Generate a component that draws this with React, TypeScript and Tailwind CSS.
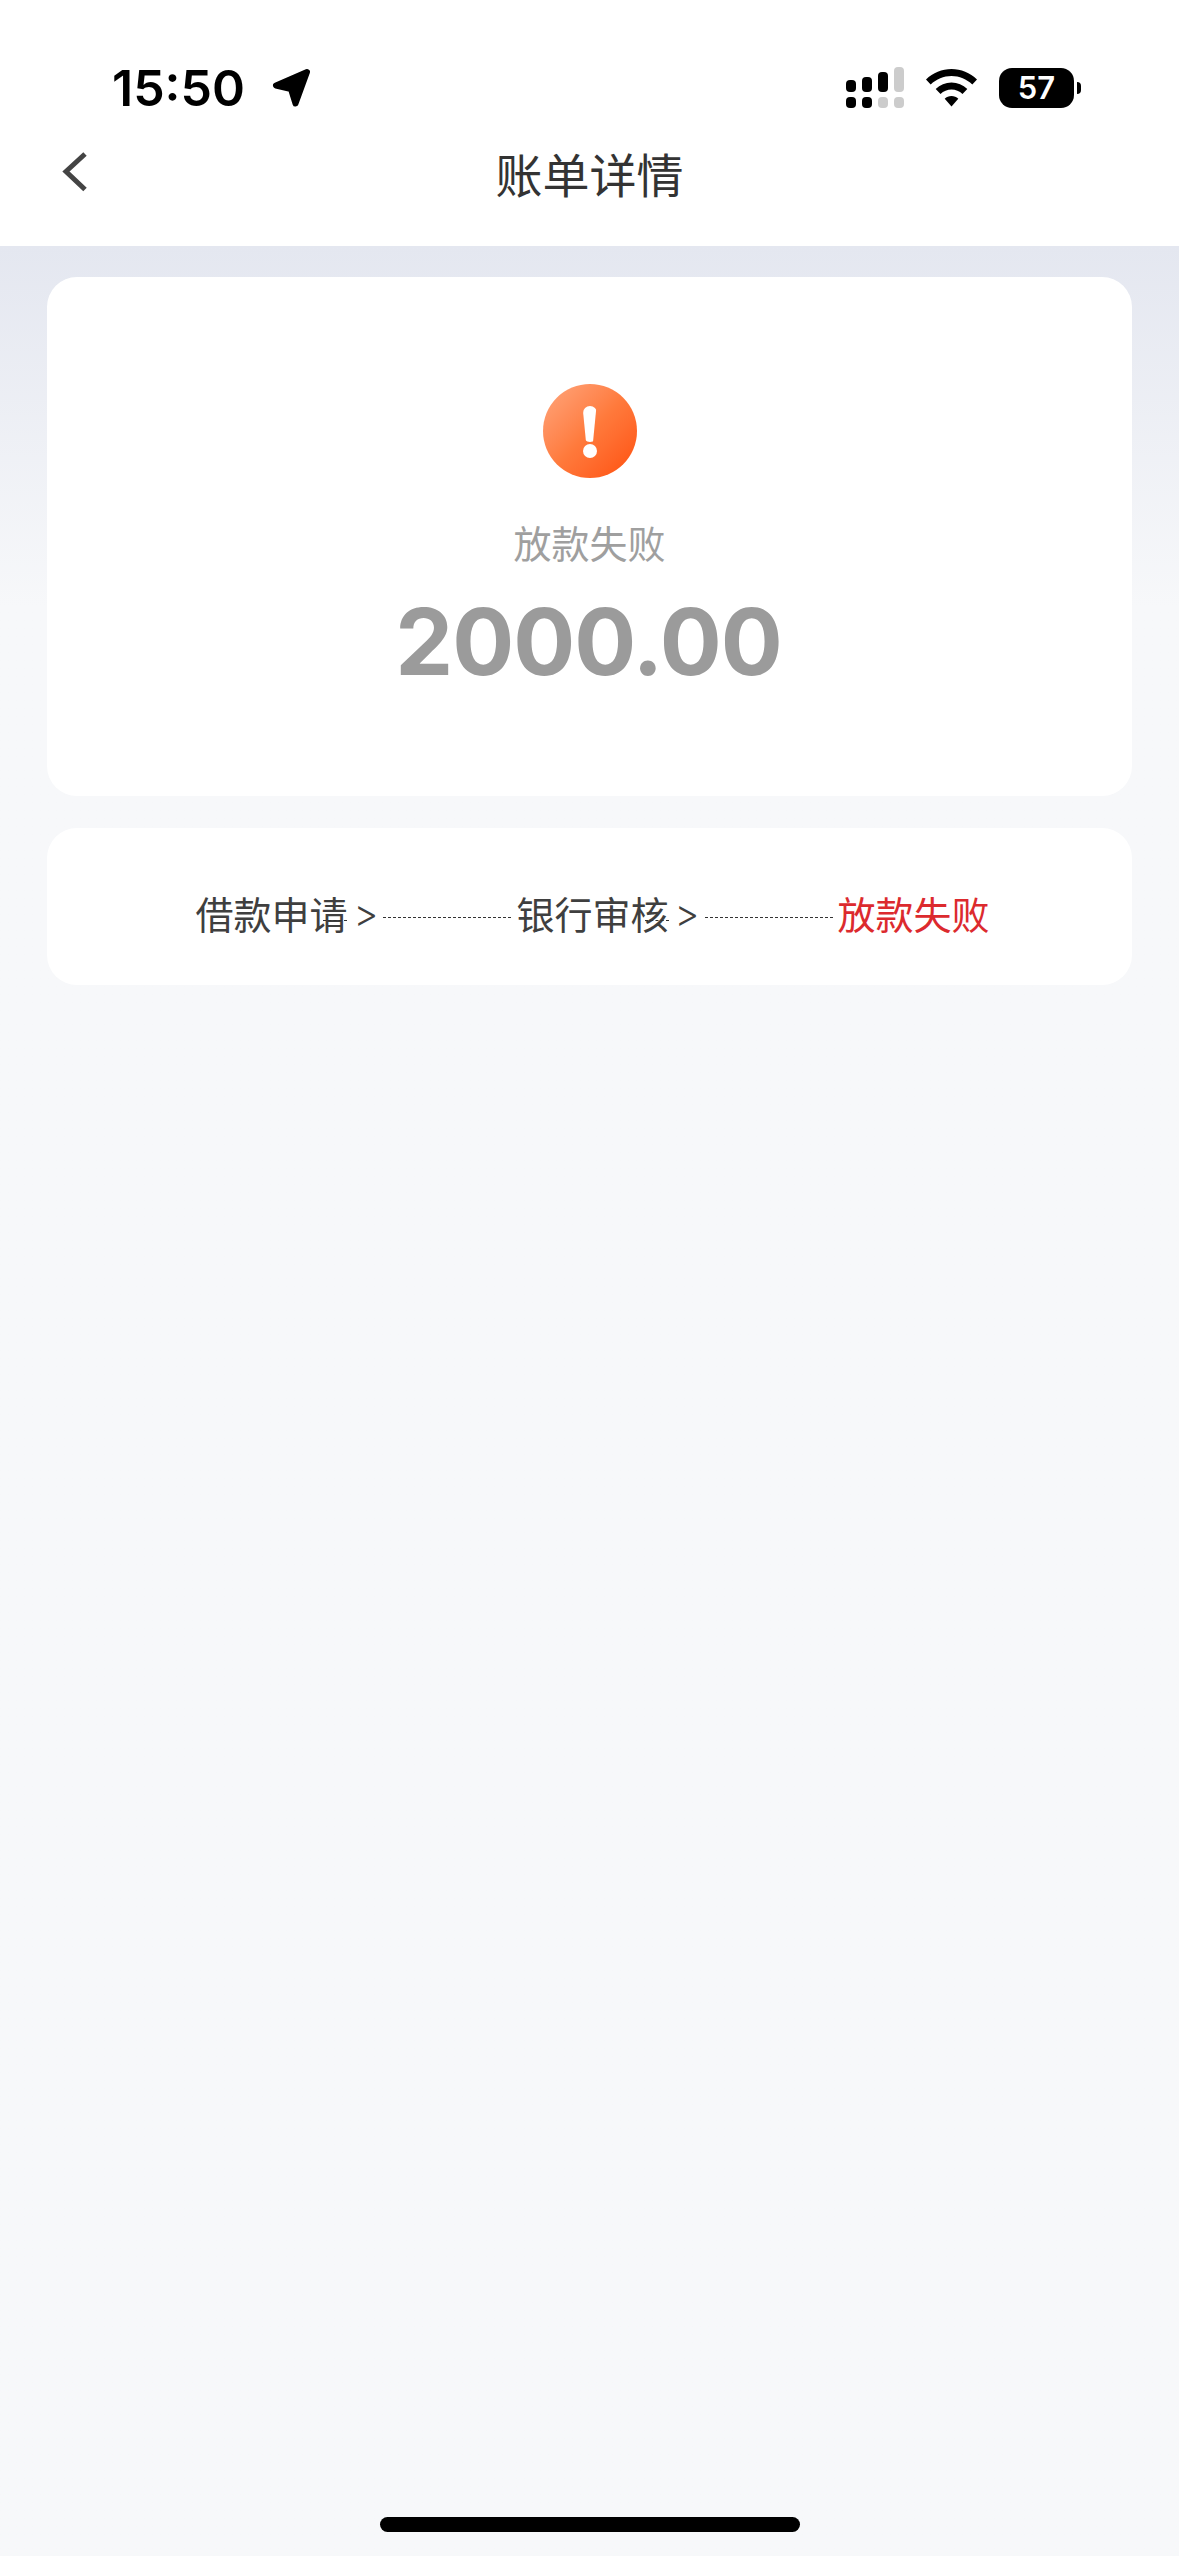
import React from 'react';

const cjk = { fontFamily: '"Noto Sans CJK SC", sans-serif' };

const SignalIcon = () => (
  <svg width="58" height="41" viewBox="0 0 58 41" className="block">
    <rect x="0" y="13" width="10" height="12" rx="4" fill="#000" />
    <rect x="16" y="10" width="10" height="15" rx="4" fill="#000" />
    <rect x="32" y="5" width="10" height="20" rx="4" fill="#000" />
    <rect x="48" y="0" width="10" height="25" rx="4" fill="#ccc" />
    <rect x="0" y="30" width="10" height="11" rx="4" fill="#000" />
    <rect x="16" y="30" width="10" height="11" rx="4" fill="#000" />
    <rect x="32" y="30" width="10" height="11" rx="4" fill="#ccc" />
    <rect x="48" y="30" width="10" height="11" rx="4" fill="#ccc" />
  </svg>
);

const WifiIcon = () => (
  <svg width="51" height="38" viewBox="0 0 51 38" className="block">
    <path
      d="M25.5 0C35 0 44 3.700 51 10.500L46.300 15.500C40.700 10.100 33.300 7 25.500 7C17.700 7 10.300 10.100 4.700 15.500L0 10.500C7 3.700 16 0 25.500 0Z"
      fill="#000"
    />
    <path
      d="M25.500 13.500C31.500 13.500 37 15.800 41.300 19.900L36.500 24.900C33.500 22.100 29.600 20.500 25.500 20.500C21.400 20.500 17.500 22.100 14.500 24.900L9.700 19.900C14 15.800 19.500 13.500 25.500 13.500Z"
      fill="#000"
    />
    <path d="M25.500 27C28.100 27 30.500 28 32.300 29.800L25.500 37.500L18.700 29.800C20.500 28 22.900 27 25.500 27Z" fill="#000" />
  </svg>
);

const LocationIcon = () => (
  <svg width="40" height="40" viewBox="0 0 40 40" className="block">
    <path
      d="M36 4L5 17.500L20 21L24.500 35.500Z"
      fill="#000"
      stroke="#000"
      strokeWidth="6"
      strokeLinejoin="round"
    />
  </svg>
);

const Battery = () => (
  <div className="flex items-center gap-[3px]">
    <div
      className="flex h-[40px] w-[75px] items-center justify-center rounded-[13px] bg-black text-[31px] font-semibold leading-none text-white"
      style={{ fontFamily: 'Inter, sans-serif' }}
    >
      57
    </div>
    <div className="h-[12px] w-[4px] rounded-r-full bg-black" />
  </div>
);

const Connector = ({ className }: { className: string }) => (
  <div className={`h-0 border-t-[1.5px] border-dashed border-[#333] ${className}`} />
);

const Step = ({ label }: { label: string }) => (
  <>
    <div className="relative text-[38px] leading-[52px] text-[#3f3f3f]" style={cjk}>
      {label}
      <div className="absolute right-0 top-[33px] w-[24px]">
        <Connector className="w-full" />
      </div>
    </div>
    <span
      className="ml-[6px] w-[20px] text-[38px] font-light leading-[52px] text-[#3f3f3f]"
      style={{ fontFamily: 'Inter, sans-serif' }}
    >
      &gt;
    </span>
    <Connector className="ml-[10px] mr-[5px] mt-[9px] w-[128px]" />
  </>
);

export default function App() {
  return (
    <div className="flex min-h-[2556px] w-full flex-col bg-[#f7f8fa]">
      <div className="bg-white pt-[67px]">
        <div className="flex h-[41px] items-center justify-between pl-[112px] pr-[98px]">
          <div className="flex items-center gap-[26px]">
            <span
              className="text-[50px] font-semibold leading-none text-black"
              style={{ fontFamily: 'Inter, sans-serif' }}
            >
              15:50
            </span>
            <LocationIcon />
          </div>
          <div className="flex items-center gap-[22px]">
            <SignalIcon />
            <WifiIcon />
            <Battery />
          </div>
        </div>
        <div className="relative flex h-[138px] items-center justify-center pb-[10px]">
          <svg width="26" height="42" viewBox="0 0 26 42" className="absolute left-[62px] top-[43px]">
            <path d="M23 3L4 20.500L23 38.500" fill="none" stroke="#444" strokeWidth="5" />
          </svg>
          <h1 className="text-[47px] font-normal leading-none text-[#333]" style={cjk}>
            账单详情
          </h1>
        </div>
      </div>

      <div className="flex flex-1 flex-col bg-gradient-to-b from-[#e4e7f0] to-[#f7f8fa] to-[360px] px-[47px] pt-[31px]">
        <div className="flex h-[519px] flex-col items-center rounded-[30px] bg-white pt-[107px]">
          <div className="relative h-[94px] w-[94px] rounded-full bg-gradient-to-br from-[#ffa67c] via-[#ff7a3c] to-[#ff4d00]">
            <div className="absolute left-[40px] top-[22px] h-[36px] w-[14px] rounded-full bg-white [clip-path:polygon(0_0,100%_0,75%_100%,25%_100%)]" />
            <div className="absolute left-[40px] top-[60px] h-[14px] w-[14px] rounded-full bg-white" />
          </div>
          <div className="mt-[38px] text-[38px] leading-[52px] text-[#9f9f9f]" style={cjk}>
            放款失败
          </div>
          <div
            className="mt-[18px] pr-[2px] text-[92px] font-bold leading-[112px] tracking-[-1px] text-[#9b9b9b]"
            style={{ fontFamily: 'Inter, sans-serif' }}
          >
            2000.00
          </div>
        </div>

        <div className="mt-[32px] flex h-[157px] items-center justify-center rounded-[30px] bg-white pl-[6px] pt-[12px]">
          <Step label="借款申请" />
          <Step label="银行审核" />
          <div className="text-[38px] leading-[52px] text-[#dc2a2e]" style={cjk}>
            放款失败
          </div>
        </div>

        <div className="flex flex-1 items-end justify-center pb-[24px]">
          <div className="h-[15px] w-[420px] rounded-full bg-black" />
        </div>
      </div>
    </div>
  );
}
